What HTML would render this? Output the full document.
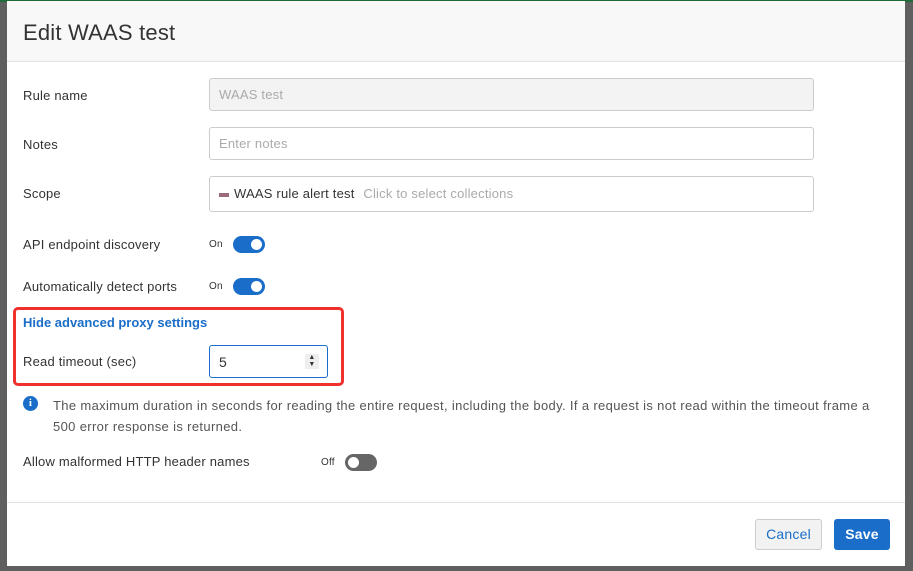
<!DOCTYPE html><html><head><style>
*{box-sizing:border-box}body{margin:0;width:913px;height:571px;background:#5f5f5f;font-family:"Liberation Sans",sans-serif;position:relative;overflow:hidden;color:#333;letter-spacing:0.2px}
.top{position:absolute;left:0;top:0;width:913px;height:2px;background:#1e6b3a}
.m{position:absolute;left:7px;top:1px;width:898px;height:565px;background:#fff}
.hd{height:61px;background:#f8f8f8;border-bottom:1px solid #e2e2e2;padding:19px 0 0 16px;font-size:22px;color:#333}
.lb{position:absolute;left:16px;font-size:13px;color:#333}
.in{position:absolute;left:202px;width:605px;border:1px solid #ccc;border-radius:3px;font-size:13px;padding:0 9px}
.sw{position:absolute;width:32px;height:17px;border-radius:9px;background:#1a6dc8}
.sw:after{content:"";position:absolute;top:3px;right:3px;width:11px;height:11px;border-radius:50%;background:#fff}
.on{position:absolute;font-size:10px;color:#333}
</style></head><body><div class="top"></div>
<div class="m">
<div class="hd">Edit WAAS test</div>
<div class="lb" style="top:87px">Rule name</div>
<div class="in" style="top:77px;height:33px;line-height:31px;background:#f3f3f3;color:#aaa">WAAS test</div>
<div class="lb" style="top:136px">Notes</div>
<div class="in" style="top:126px;height:33px;line-height:31px;color:#aaa">Enter notes</div>
<div class="lb" style="top:185px">Scope</div>
<div class="in" style="top:175px;height:36px;line-height:34px;color:#333"><span style="display:inline-block;width:10px;height:4px;background:#9b6b7a;vertical-align:middle;margin-right:5px"></span>WAAS rule alert test <span style="color:#aaa;margin-left:5px">Click to select collections</span></div>
<div class="lb" style="top:236px">API endpoint discovery</div>
<div class="on" style="left:202px;top:238px">On</div><div class="sw" style="left:226px;top:235px"></div>
<div class="lb" style="top:278px">Automatically detect ports</div>
<div class="on" style="left:202px;top:280px">On</div><div class="sw" style="left:226px;top:277px"></div>
<div style="position:absolute;left:6px;top:306px;width:331px;height:79px;border:3px solid #f0302c;border-radius:5px"></div>
<div class="lb" style="top:314px;color:#1a6dc8;font-weight:bold;letter-spacing:0">Hide advanced proxy settings</div>
<div class="lb" style="top:353px">Read timeout (sec)</div>
<div style="position:absolute;left:202px;top:344px;width:119px;height:33px;border:1px solid #1a6dc8;border-radius:3px;font-size:14px;padding:8px 0 0 9px">5<span style="position:absolute;right:8px;top:8px;width:14px;height:15px;background:#eee;font-size:7px;line-height:7px;text-align:center;color:#333">▲<br>▼</span></div>
<div style="position:absolute;left:16px;top:395px;width:15px;height:15px;border-radius:50%;background:#1a6dc8;color:#fff;font-size:11px;font-weight:bold;text-align:center;line-height:15px;font-family:'Liberation Serif',serif">i</div>
<div style="position:absolute;left:46px;top:394px;width:835px;font-size:13px;line-height:21px;color:#555;letter-spacing:0.35px">The maximum duration in seconds for reading the entire request, including the body. If a request is not read within the timeout frame a 500 error response is returned.</div>
<div class="lb" style="top:453px">Allow malformed HTTP header names</div>
<div class="on" style="left:314px;top:456px">Off</div><div style="position:absolute;left:338px;top:453px;width:32px;height:17px;border-radius:9px;background:#666"><div style="position:absolute;left:3px;top:3px;width:11px;height:11px;border-radius:50%;background:#fff"></div></div>
<div style="position:absolute;left:0;top:501px;width:898px;height:1px;background:#e2e2e2"></div>
<div style="position:absolute;left:748px;top:518px;width:67px;height:31px;border:1px solid #ccc;border-radius:3px;background:#f2f2f2;color:#1a6dc8;font-size:14px;text-align:center;line-height:29px">Cancel</div>
<div style="position:absolute;left:827px;top:518px;width:56px;height:31px;border-radius:3px;background:#1a6dc8;color:#fff;font-size:14px;text-align:center;line-height:31px;font-weight:bold">Save</div>
</div></body></html>
